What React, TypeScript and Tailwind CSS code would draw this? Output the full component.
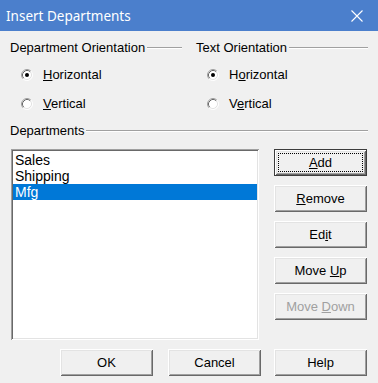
import React from 'react';

const raised =
  'shadow-[inset_1px_1px_#ffffff,inset_-1px_-1px_#696969,inset_2px_2px_#e3e3e3,inset_-2px_-2px_#a0a0a0]';

function Radio({ checked }: { checked?: boolean }) {
  return (
    <svg width="12" height="12" viewBox="0 0 12 12" className="shrink-0">
      <circle cx="6" cy="6" r="5" fill="#ffffff" />
      <path d="M2.11 9.89 A5.5 5.5 0 0 1 9.89 2.11" fill="none" stroke="#a0a0a0" />
      <path d="M2.82 9.18 A4.5 4.5 0 0 1 9.18 2.82" fill="none" stroke="#696969" />
      <path d="M9.89 2.11 A5.5 5.5 0 0 1 2.11 9.89" fill="none" stroke="#ffffff" />
      <path d="M9.18 2.82 A4.5 4.5 0 0 1 2.82 9.18" fill="none" stroke="#e3e3e3" />
      {checked && <circle cx="6" cy="6" r="2" fill="#000000" />}
    </svg>
  );
}

function GroupHeader({ title }: { title: string }) {
  return (
    <div className="flex items-center h-[14px]">
      <span className="leading-[14px] pr-[2px]">{title}</span>
      <div className="flex-1 h-[2px] border-t border-[#a0a0a0] border-b border-b-white" />
    </div>
  );
}

function RadioRow({ checked, children }: { checked?: boolean; children: React.ReactNode }) {
  return (
    <div className="flex items-center h-[29px] pl-[11px] gap-[10px]">
      <Radio checked={checked} />
      <span className="leading-[16px]">{children}</span>
    </div>
  );
}

function Btn({
  children,
  isDefault,
  disabled,
}: {
  children: React.ReactNode;
  isDefault?: boolean;
  disabled?: boolean;
}) {
  if (isDefault) {
    return (
      <div className="w-[93px] h-[27px] border border-[#3c3c3c] bg-[#f0f0f0] flex">
        <div className={`flex-1 flex ${raised}`}>
          <div className="flex-1 m-[3px] border border-dotted border-black flex items-center justify-center">
            {children}
          </div>
        </div>
      </div>
    );
  }
  return (
    <div
      className={`w-[93px] h-[27px] bg-[#f0f0f0] flex items-center justify-center ${raised} ${
        disabled ? 'text-[#a0a0a0]' : ''
      }`}
    >
      {children}
    </div>
  );
}

export default function App() {
  const items = ['Sales', 'Shipping', 'Mfg'];
  const selected = 2;

  return (
    <div
      className="w-[378px] h-[383px] bg-[#f0f0f0] text-black text-[13px] overflow-hidden"
      style={{ fontFamily: '"Liberation Sans", Arial, sans-serif' }}
    >
      {/* タイトルバー */}
      <div className="h-[31px] bg-[#4b7fcc] flex items-center justify-between pl-[6px] pr-[15px]">
        <span
          className="text-white text-[13.5px] leading-[18px]"
          style={{ fontFamily: '"Noto Sans", "Open Sans", sans-serif' }}
        >
          Insert Departments
        </span>
        <svg width="12" height="12" viewBox="0 0 12 12">
          <path d="M0.5 0.5 L11.5 11.5 M11.5 0.5 L0.5 11.5" stroke="#ffffff" strokeWidth="1.1" />
        </svg>
      </div>

      <div className="px-[10px] pt-[10px]">
        {/* 向きの設定 */}
        <div className="grid grid-cols-2 gap-[14px]">
          <div>
            <GroupHeader title="Department Orientation" />
            <div className="mt-[5px]">
              <RadioRow checked>
                <span className="underline underline-offset-1">H</span>orizontal
              </RadioRow>
              <RadioRow>
                <span className="underline underline-offset-1">V</span>ertical
              </RadioRow>
            </div>
          </div>
          <div>
            <GroupHeader title="Text Orientation" />
            <div className="mt-[5px]">
              <RadioRow checked>
                H<span className="underline underline-offset-1">o</span>rizontal
              </RadioRow>
              <RadioRow>
                V<span className="underline underline-offset-1">e</span>rtical
              </RadioRow>
            </div>
          </div>
        </div>

        <div className="mt-[6px]">
          <GroupHeader title="Departments" />
        </div>

        {/* リストとボタン */}
        <div className="mt-[11px] flex justify-between">
          <div className="ml-[1px] w-[248px] h-[191px] bg-white pt-[3px] pl-[2px] pr-[2px] shadow-[inset_1px_1px_#a0a0a0,inset_-1px_-1px_#ffffff,inset_2px_2px_#696969,inset_-2px_-2px_#e3e3e3]">
            {items.map((it, i) => (
              <div
                key={it}
                className={`h-[16px] leading-[16px] text-[14px] pl-[2px] ${
                  i === selected ? 'bg-[#0078d7] text-white' : ''
                }`}
              >
                {it}
              </div>
            ))}
          </div>
          <div className="flex flex-col gap-[9px] mr-[1px]">
            <Btn isDefault>
              <span className="underline underline-offset-1">A</span>dd
            </Btn>
            <Btn>
              <span className="underline underline-offset-1">R</span>emove
            </Btn>
            <Btn>
              Ed<span className="underline underline-offset-1">i</span>t
            </Btn>
            <Btn>
              Move&nbsp;<span className="underline underline-offset-1">U</span>p
            </Btn>
            <Btn disabled>
              Move&nbsp;<span className="underline underline-offset-1">D</span>own
            </Btn>
          </div>
        </div>

        {/* 下部ボタン */}
        <div className="mt-[9px] flex pl-[50px]">
          <Btn>OK</Btn>
          <div className="w-[15px]" />
          <Btn>Cancel</Btn>
          <div className="w-[13px]" />
          <Btn>Help</Btn>
        </div>
      </div>
    </div>
  );
}
